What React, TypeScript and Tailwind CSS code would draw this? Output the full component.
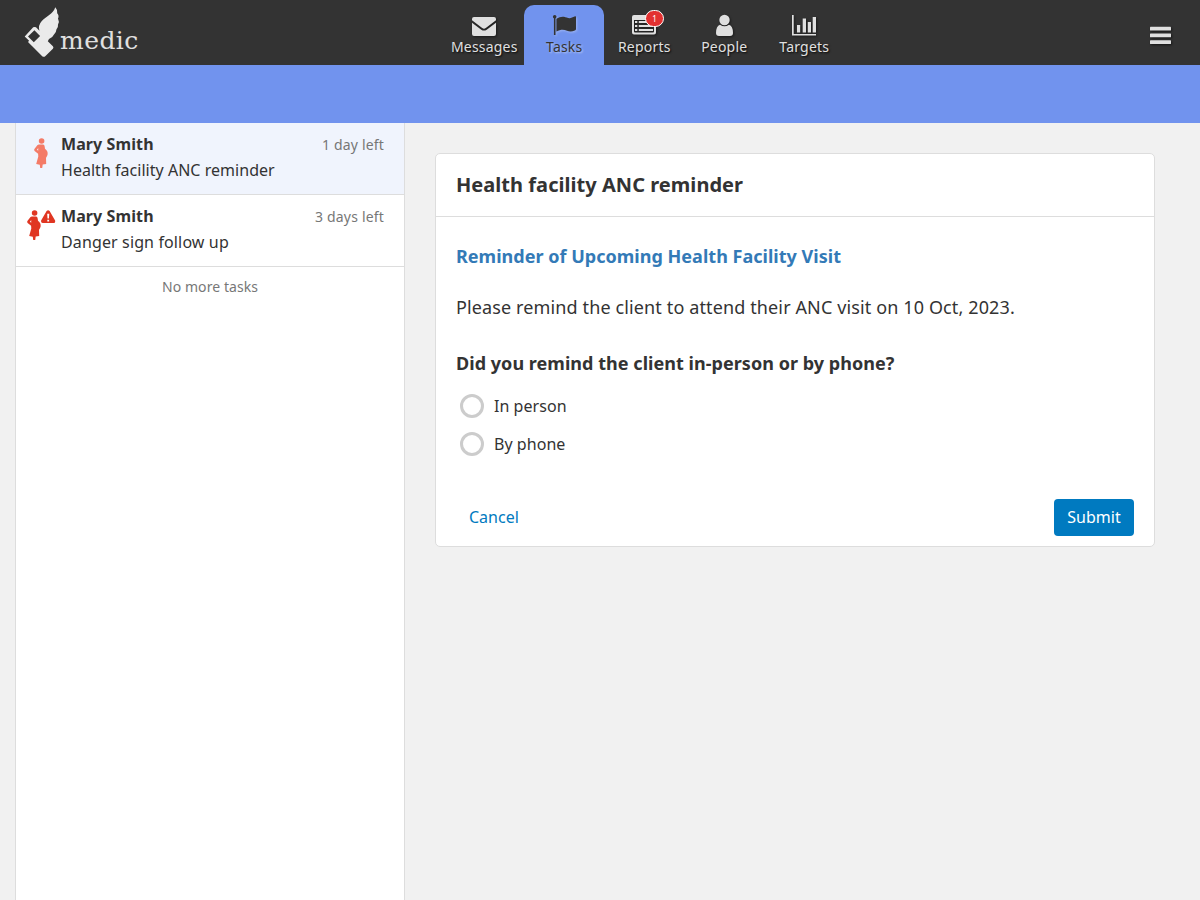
import type { ReactNode } from 'react';

function Tab({ label, active, children, badge }: { label: string; active?: boolean; children: ReactNode; badge?: string }) {
  return (
    <div
      className={
        active
          ? 'relative flex h-[60px] w-20 flex-col items-center rounded-t-[10px] bg-[#7193ee] text-[#333333] [text-shadow:1px_1px_2px_rgba(255,255,255,0.5)]'
          : 'relative flex h-[60px] w-20 flex-col items-center text-[#e0e0e0] [text-shadow:1px_1px_2px_rgba(0,0,0,0.9)]'
      }
    >
      <svg
        viewBox="0 0 80 34"
        className={
          active
            ? 'block h-[34px] w-20 shrink-0 fill-current [filter:drop-shadow(1px_1px_1px_rgba(255,255,255,0.3))]'
            : 'block h-[34px] w-20 shrink-0 fill-current [filter:drop-shadow(1px_1px_1px_rgba(0,0,0,0.5))]'
        }
      >
        {children}
      </svg>
      <span className="-mt-[2px] pl-[0.5px] text-[14px] leading-5 tracking-[0.2px] whitespace-nowrap">{label}</span>
      {badge && (
        <span className="absolute top-[5px] left-[41px] flex h-[17px] w-[19px] items-center justify-center rounded-full border border-white bg-[#e33030] pt-px text-[8px] leading-none text-white [text-shadow:none]">
          {badge}
        </span>
      )}
    </div>
  );
}

function Pregnant({ className }: { className: string }) {
  return (
    <svg viewBox="0 0 14 31" className={className}>
      <circle cx="7.6" cy="3" r="2.8" />
      <path
        fillRule="evenodd"
        d="M5 6.4H9C10.2 6.4 10.6 7.3 10.7 8.8L11 10.8C13 12.2 14 14 13.6 16.4C13.3 18 12.3 19 12 20L12.2 26L8.7 26.4L8.2 30H6.2L5.8 26.7L2.2 26L4.3 18.5L4.1 15.8L.6 12.9C0 12.2.1 11.5.6 10.8L3.3 7.3C3.8 6.7 4.2 6.4 5 6.4ZM4.2 9.9L3 11.7L4.2 12.8Z"
      />
    </svg>
  );
}

function TaskRow({ title, due, icon, selected }: { title: ReactNode; due: string; icon: ReactNode; selected?: boolean }) {
  return (
    <li
      className={
        selected
          ? 'flex h-[72px] border-b border-[#dddddd] bg-[#f0f4fd] pt-[8px] pr-5'
          : 'flex h-[72px] border-b border-[#dddddd] bg-white pt-[8px] pr-5'
      }
    >
      <div className="w-[45px] shrink-0 pt-[7px]">{icon}</div>
      <div className="grow">
        <div className="flex items-center justify-between">
          <span className="text-[16px] leading-[26px] font-bold tracking-[0.1px]">Mary Smith</span>
          <span className="pt-[2px] text-[14px] leading-6 tracking-[0.18px] text-[#777777]">{due}</span>
        </div>
        <div className="text-[16px] leading-[26px]">{title}</div>
      </div>
    </li>
  );
}

function Choice({ label }: { label: string }) {
  return (
    <label className="flex h-[38px] items-center gap-[10px] pl-1 text-[16px] tracking-[0.05px]">
      <span className="size-6 rounded-full border-3 border-[#cccccc] bg-white" />
      {label}
    </label>
  );
}

export default function App() {
  return (
    <div className="flex h-[900px] w-[1200px] flex-col overflow-hidden bg-[#f1f1f1] font-['Noto_Sans',sans-serif] text-[#333333]">
      <header className="flex h-[65px] shrink-0 bg-[#333333]">
        <div className="flex w-[444px] pl-[22px]">
          <svg viewBox="22 4 38 56" className="mt-1 h-14 w-[38px] shrink-0 fill-[#eaeaea]">
            <path
              fillRule="evenodd"
              d="M24.7 36.4L33.2 27.3Q35.6 26.3 37 28.2L39.4 30.8Q37.8 25.5 41.6 21.3C46 16 53 14.2 55.3 7.2Q57.8 9.8 57.2 13.3Q59.4 15.8 58 18.6Q59.6 21.6 58 24.6Q58.4 27.8 56.4 29.5Q56.2 33 54 34.4Q52.4 37.8 49 39L47.8 41.2L52.9 46.2Q54 47.4 52.9 48.7L45.5 56Q43.7 57.7 42 56L28 42.1L29.1 40.8ZM28 36.5L33.8 42.2L40.1 36.1L34.4 30.3Z"
            />
          </svg>
          <span className="mt-[23px] h-9 font-['DejaVu_Serif',serif] text-[25px] leading-9 tracking-[0.45px] text-[#e0e0e0]">medic</span>
        </div>
        <nav className="flex pt-[5px]">
          <Tab label="Messages">
            <path d="M30 12H50Q52 12 52 14V15.3L41.8 23Q40 24.3 38.2 23L28 15.3V14Q28 12 30 12ZM28 17.7L37.3 24.7Q40 26.5 42.7 24.7L52 17.7V29Q52 31 50 31H30Q28 31 28 29Z" />
          </Tab>
          <Tab label="Tasks" active>
            <circle cx="30.7" cy="11.7" r="1.8" />
            <path d="M29.9 12H31.5V30H29.9ZM32.4 13.7Q36.4 11.2 40 11.8C43 12.5 45 14 48 12.6L51.2 11.2Q52 11 52 12V24Q52 25 50.8 25.5Q46.8 27.4 43 25.8C39.5 24 36.5 24.4 32.4 26.5Z" />
          </Tab>
          <Tab label="Reports" badge="1">
            <path
              fillRule="evenodd"
              d="M30 10H50Q52 10 52 12V27.5Q52 29.5 50 29.5H30Q28 29.5 28 27.5V12Q28 10 30 10ZM30 15V26.7Q30 27.5 31 27.5H49Q50 27.5 50 26.7V15ZM31 16H33.3V18H31ZM34.8 16H49V18H34.8ZM31 20H33.3V22H31ZM34.8 20H49V22H34.8ZM31 24H33.3V26H31ZM34.8 24H49V26H34.8Z"
            />
          </Tab>
          <Tab label="People">
            <ellipse cx="40.5" cy="15" rx="5.2" ry="5.2" />
            <path d="M36 19.7Q40.5 22.7 45 19.7Q49 21 49 28Q49 31 46 31H35Q32 31 32 28Q32 21 36 19.7Z" />
          </Tab>
          <Tab label="Targets">
            <path d="M28 10H29.7V29H52V30.6H28ZM33 20H36.2V27.5H33ZM38.7 13.5H42V27.5H38.7ZM43.8 17H47V27.5H43.8ZM48.7 12H52V27.5H48.7Z" />
          </Tab>
        </nav>
        <div className="flex grow justify-end pt-[26px] pr-[29px]">
          <svg viewBox="0 0 21 19" className="h-[19px] w-[21px] fill-[#e0e0e0] [filter:drop-shadow(1px_1px_1px_rgba(0,0,0,0.6))]">
            <rect y=".7" width="21" height="3.8" rx=".6" />
            <rect y="7.5" width="21" height="3.8" rx=".6" />
            <rect y="14.3" width="21" height="3.8" rx=".6" />
          </svg>
        </div>
      </header>
      <div className="h-[58px] shrink-0 bg-[#7193ee]" />
      <main className="flex grow">
        <aside className="ml-[15px] w-[390px] border-x border-[#dddddd] bg-white">
          <ul>
            <TaskRow
              title={<span className="tracking-[0.03px]">Health facility ANC reminder</span>}
              due="1 day left"
              selected
              icon={<Pregnant className="ml-[18px] h-[31px] w-[14px] fill-[#f47b67]" />}
            />
            <TaskRow
              title={<span className="tracking-[0.13px]">Danger sign follow up</span>}
              due="3 days left"
              icon={
                <div className="flex pl-[11px]">
                  <Pregnant className="h-[31px] w-[14px] fill-[#e03622]" />
                  <svg viewBox="0 0 15 14" className="h-[14px] w-[15px] fill-[#e03622]">
                    <path fillRule="evenodd" d="M5.6 1Q7.1-.7 8.6 1L14.1 10.5Q14.6 13 12.7 13H1.6Q-.3 13 .1 10.5ZM6.2 3.8L6.5 8.6H7.9L8.3 3.8ZM6.3 9.8V11.5H8.1V9.8Z" />
                  </svg>
                </div>
              }
            />
          </ul>
          <p className="pt-[10px] text-center text-[14px] leading-5 tracking-[0.07px] text-[#777777]">No more tasks</p>
        </aside>
        <section className="mt-[30px] ml-[30px] flex h-[394px] w-[720px] flex-col rounded-[5px] border border-[#dddddd] bg-white">
          <h1 className="h-[63px] shrink-0 border-b border-[#dddddd] px-5 text-[20px] leading-[62px] font-bold tracking-[0.04px]">Health facility ANC reminder</h1>
          <div className="flex grow flex-col px-5 pt-[26px]">
            <h2 className="text-[18px] leading-[26px] font-bold tracking-[0.02px] text-[#337ab7]">Reminder of Upcoming Health Facility Visit</h2>
            <p className="mt-[25px] text-[18px] leading-[26px] tracking-[0.125px]">Please remind the client to attend their ANC visit on 10 Oct, 2023.</p>
            <h3 className="mt-[30px] text-[18px] leading-[26px] font-bold tracking-[0.04px]">Did you remind the client in-person or by phone?</h3>
            <div className="mt-[11px]">
              <Choice label="In person" />
              <Choice label="By phone" />
            </div>
            <div className="mt-[36px] flex h-[37px] items-center justify-between text-[16px]">
              <button className="h-[37px] px-[13px] pb-[2px] text-[#007ac0]">Cancel</button>
              <button className="h-[37px] w-20 rounded-[4px] bg-[#007ac0] pb-[2px] text-white">Submit</button>
            </div>
          </div>
        </section>
      </main>
    </div>
  );
}
